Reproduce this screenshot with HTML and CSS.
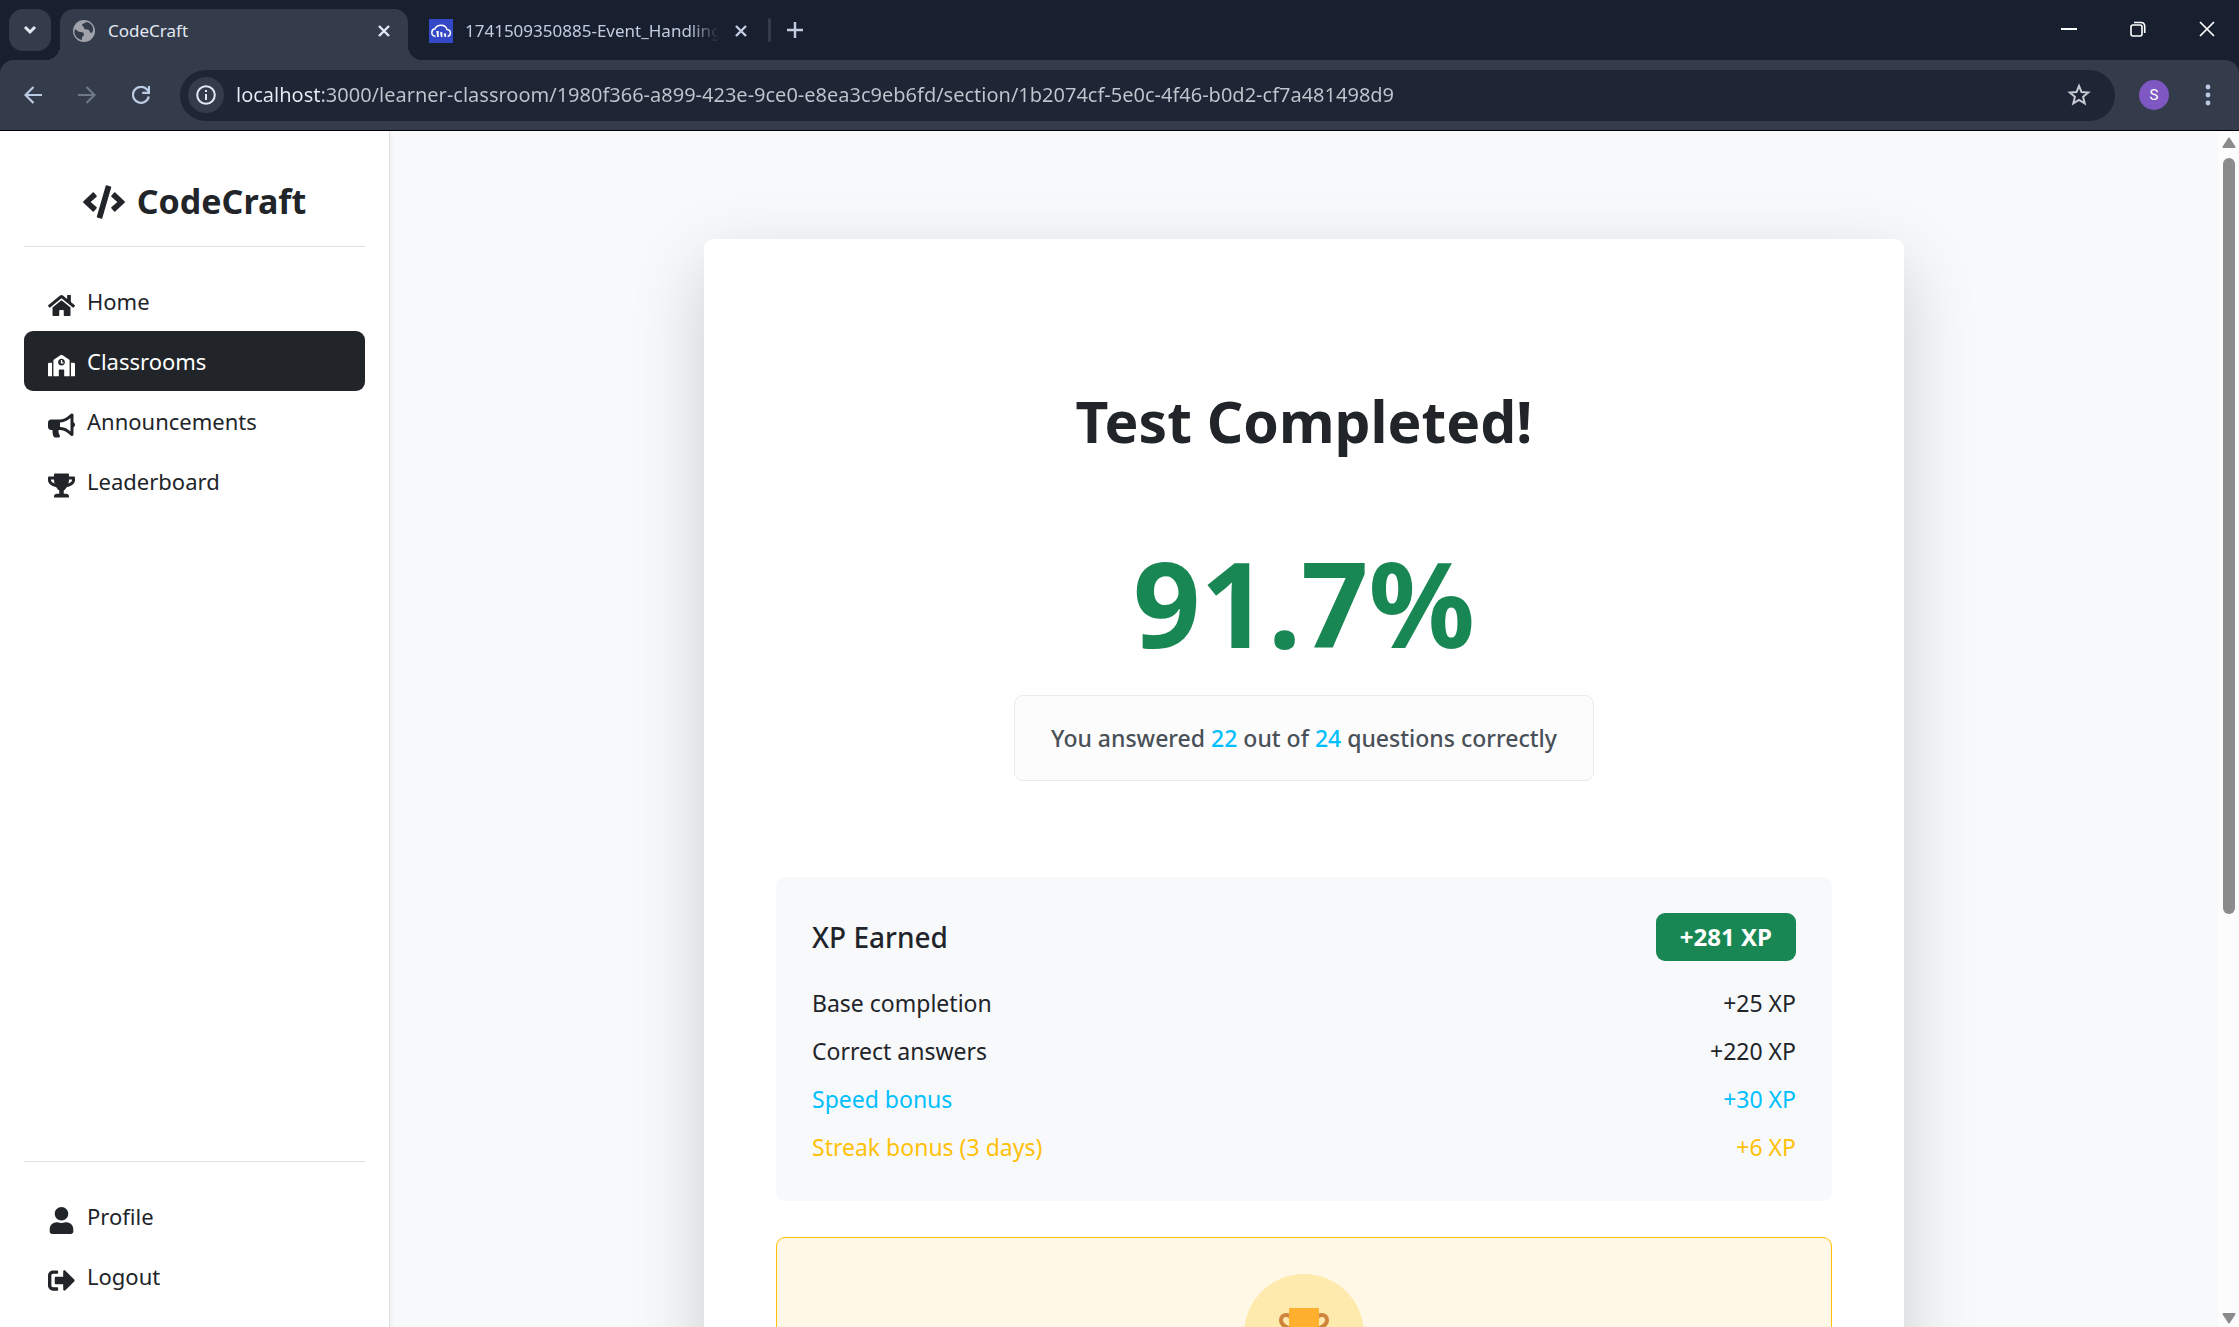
FILE: index.html
```
<!DOCTYPE html>
<html lang="en">
<head>
<meta charset="utf-8">
<title>CodeCraft</title>
<link rel="stylesheet" href="styles.css">
</head>
<body>
<header class="browser">
  <div class="tabstrip">
    <button class="tab-search" aria-label="Search tabs"><svg width="14" height="10" viewBox="0 0 14 10"><path d="M2 2l5 5 5-5" fill="none" stroke="#e3e8f2" stroke-width="3"/></svg></button>
    <div class="tab tab-active">
      <svg class="favicon" viewBox="0 0 24 24"><circle cx="12" cy="12" r="11" fill="#a0a3aa"/><path d="M3 10c2 1 3 3 6 3 2 0 3 1 3 3 0 1-2 1-2 3v2C5 20 2 16 2.500 12zM14 3c-1 2-4 1-4 3 0 1 2 1 2 3s3 1 5 2c1 1 0 2 2 3 1 0 1-1 2-2 1-5-3-9-7-9z" fill="#343c4c"/></svg>
      <span class="tab-title">CodeCraft</span>
      <button class="icon-btn" aria-label="Close tab"><svg width="14" height="14" viewBox="0 0 14 14"><path d="M2 2l10 10M12 2L2 12" stroke="#e3e8f2" stroke-width="2.400"/></svg></button>
    </div>
    <div class="tab">
      <svg class="favicon" viewBox="0 0 24 24"><rect width="24" height="24" fill="#3448c5"/><path d="M6.500 17.500C4 17 2.800 15.500 2.800 13.500c0-2 1.400-3.400 3.200-3.700C7 7.500 9.200 6.200 12 6.200c3 0 5.300 1.700 6 4.300 2 .2 3.400 1.600 3.400 3.500 0 1.700-1 3-2.700 3.500" fill="none" stroke="#fff" stroke-width="1.500"/><path d="M7.300 12h2.400v6H8.200zM11 13.200h2.400V18H11.900zM14.700 14.400h2.400V18h-1.500z" fill="#fff"/></svg>
      <span class="tab-title tab-title-faded">1741509350885-Event_Handling</span>
      <button class="icon-btn" aria-label="Close tab"><svg width="14" height="14" viewBox="0 0 14 14"><path d="M2 2l10 10M12 2L2 12" stroke="#c3cce0" stroke-width="2.400"/></svg></button>
    </div>
    <span class="tab-divider"></span>
    <button class="icon-btn new-tab" aria-label="New tab"><svg width="16" height="16" viewBox="0 0 16 16"><path d="M8 0v16M0 8h16" stroke="#c3cce0" stroke-width="2.400"/></svg></button>
    <div class="window-controls">
      <button class="window-btn" aria-label="Minimize"><svg width="16" height="16" viewBox="0 0 16 16"><path d="M0 8h16" stroke="#fff" stroke-width="2"/></svg></button>
      <button class="window-btn" aria-label="Restore"><svg width="16" height="16" viewBox="0 0 16 16" fill="none" stroke="#fff" stroke-width="1.600"><rect x="1" y="4" width="11" height="11" rx="2"/><path d="M4 1.500h7A3.500 3.500 0 0 1 14.700 5v7"/></svg></button>
      <button class="window-btn" aria-label="Close"><svg width="16" height="16" viewBox="0 0 16 16"><path d="M1 1l14 14M15 1L1 15" stroke="#fff" stroke-width="1.700"/></svg></button>
    </div>
  </div>
  <div class="toolbar">
    <button class="nav-btn" aria-label="Back"><svg viewBox="0 0 18 18"><path d="M18 9H1.500M9.500 1L1.500 9l8 8" fill="none" stroke="#bccbe4" stroke-width="2.200"/></svg></button>
    <button class="nav-btn" aria-label="Forward"><svg viewBox="0 0 18 18"><path d="M0 9h16.500M8.500 1l8 8-8 8" fill="none" stroke="#6f7888" stroke-width="2.200"/></svg></button>
    <button class="nav-btn" aria-label="Reload"><svg viewBox="0 0 18 18"><path d="M16.800 10.500A8 8 0 1 1 15 3.500l1.800 2M17 0v6.800h-6.800" fill="none" stroke="#bccbe4" stroke-width="2.200"/></svg></button>
    <div class="address">
      <span class="site-info"><svg width="20" height="20" viewBox="0 0 20 20"><circle cx="10" cy="10" r="8.800" fill="none" stroke="#e3e8f2" stroke-width="2"/><path d="M9 9h2v6H9zM9 5h2v2H9z" fill="#e3e8f2"/></svg></span>
      <input class="url" type="text" aria-label="Address" value="localhost:3000/learner-classroom/1980f366-a899-423e-9ce0-e8ea3c9eb6fd/section/1b2074cf-5e0c-4f46-b0d2-cf7a481498d9">
      <button class="icon-btn" aria-label="Bookmark"><svg width="24" height="24" viewBox="0 0 24 24"><path d="M12 2.800l2.500 6.200 6.700.5-5.100 4.300 1.600 6.500L12 16.800l-5.700 3.500 1.600-6.500L2.800 9.500l6.700-.5z" fill="none" stroke="#c7cad1" stroke-width="2"/></svg></button>
    </div>
    <button class="avatar" aria-label="Account">S</button>
    <button class="menu-btn" aria-label="Menu"><svg width="6" height="22" viewBox="0 0 6 22" fill="#bccbe4"><circle cx="3" cy="3" r="2.400"/><circle cx="3" cy="11" r="2.400"/><circle cx="3" cy="19" r="2.400"/></svg></button>
  </div>
</header>
<div class="page">
  <aside class="sidebar">
    <div class="brand">
      <svg class="brand-icon" viewBox="0 0 640 512"><path d="M278.900 511.500l-61-17.700c-6.400-1.800-10-8.500-8.200-14.900L346.200 8.700c1.800-6.400 8.500-10 14.900-8.200l61 17.700c6.400 1.800 10 8.500 8.200 14.900L293.800 503.300c-1.900 6.400-8.500 10.100-14.900 8.200zm-114-112.200l43.500-46.400c4.600-4.900 4.300-12.700-.8-17.200L117 256l90.600-79.700c5.100-4.500 5.500-12.300.8-17.200l-43.500-46.400c-4.500-4.800-12.100-5.100-17-.5L3.800 247.200c-5.100 4.700-5.100 12.800 0 17.500l144.100 135.100c4.900 4.600 12.500 4.400 17-.5zm327.200.6l144.100-135.100c5.100-4.700 5.100-12.800 0-17.500L492.100 112.100c-4.800-4.500-12.400-4.300-17 .5L431.600 159c-4.600 4.900-4.300 12.700.8 17.200L523 256l-90.600 79.700c-5.100 4.500-5.500 12.300-.8 17.200l43.500 46.400c4.500 4.900 12.100 5.100 17 .6z"/></svg>
      <span>CodeCraft</span>
    </div>
    <nav class="menu">
      <a class="menu-link" href="#home"><svg viewBox="0 0 576 512"><path d="M280.370 148.260L96 300.110V464a16 16 0 0 0 16 16l112.060-.29a16 16 0 0 0 15.920-16V368a16 16 0 0 1 16-16h64a16 16 0 0 1 16 16v95.640a16 16 0 0 0 16 16.050L464 480a16 16 0 0 0 16-16V300L295.670 148.260a12.190 12.190 0 0 0-15.300 0zM571.600 251.470L488 182.560V44.050a12 12 0 0 0-12-12h-56a12 12 0 0 0-12 12v72.610L318.470 43a48 48 0 0 0-61 0L4.340 251.470a12 12 0 0 0-1.600 16.900l25.500 31A12 12 0 0 0 45.150 301l235.220-193.740a12.190 12.190 0 0 1 15.300 0L530.900 301a12 12 0 0 0 16.900-1.600l25.500-31a12 12 0 0 0-1.700-16.930z"/></svg>Home</a>
      <a class="menu-link menu-link-active" href="#classrooms" aria-current="page"><svg viewBox="0 0 640 512"><path d="M0 224v272c0 8.840 7.160 16 16 16h80V192H32c-17.670 0-32 14.330-32 32zm360-48h-24v-40c0-4.420-3.580-8-8-8h-16c-4.420 0-8 3.580-8 8v64c0 4.420 3.580 8 8 8h48c4.420 0 8-3.580 8-8v-16c0-4.420-3.580-8-8-8zm137.750-63.960l-160-106.670a32.020 32.020 0 0 0-35.500 0l-160 106.670A32.002 32.002 0 0 0 128 138.660V512h128V368c0-8.840 7.160-16 16-16h96c8.840 0 16 7.160 16 16v144h128V138.670c0-10.700-5.350-20.690-14.250-26.630zM320 256c-44.180 0-80-35.820-80-80s35.820-80 80-80 80 35.820 80 80-35.820 80-80 80zm288-64h-64v320h80c8.840 0 16-7.160 16-16V224c0-17.670-14.330-32-32-32z"/></svg>Classrooms</a>
      <a class="menu-link" href="#announcements"><svg viewBox="0 0 576 512"><path d="M576 240c0-23.630-12.950-44.040-32-55.120V32.010C544 23.260 537.020 0 512 0c-7.120 0-14.190 2.380-19.980 7.020l-85.030 68.030C364.280 109.190 310.660 128 256 128H64c-35.350 0-64 28.650-64 64v96c0 35.350 28.650 64 64 64h33.700c-1.390 10.480-2.180 21.140-2.180 32 0 39.770 9.260 77.350 25.560 110.940 5.190 10.690 16.520 17.060 28.400 17.060h74.280c26.050 0 41.690-29.840 25.900-50.560-16.400-21.520-26.150-48.360-26.150-77.440 0-11.110 1.620-21.790 4.410-32H256c54.660 0 108.280 18.810 150.980 52.950l85.030 68.030a32.023 32.023 0 0 0 19.980 7.020c24.920 0 32-22.780 32-32V295.130C563.050 284.040 576 263.630 576 240zm-96 141.420l-33.050-26.440C392.950 311.780 325.120 288 256 288v-96c69.120 0 136.950-23.780 190.950-66.980L480 98.580v282.840z"/></svg>Announcements</a>
      <a class="menu-link" href="#leaderboard"><svg viewBox="0 0 576 512"><path d="M552 64H448V24c0-13.300-10.700-24-24-24H152c-13.300 0-24 10.700-24 24v40H24C10.700 64 0 74.700 0 88v56c0 35.700 22.500 72.400 61.900 100.700 31.500 22.700 69.800 37.100 110 41.700C203.300 338.500 240 360 240 360v72h-48c-35.300 0-64 20.700-64 56v12c0 6.600 5.400 12 12 12h296c6.600 0 12-5.400 12-12v-12c0-35.300-28.700-56-64-56h-48v-72s36.700-21.500 68.100-73.600c40.300-4.600 78.600-19 110-41.700 39.300-28.300 61.900-65 61.900-100.700V88c0-13.300-10.700-24-24-24zM99.300 192.800C74.900 175.200 64 155.600 64 144v-16h64.200c1 32.600 5.800 61.200 12.800 86.200-15.100-5.200-29.200-12.400-41.700-21.400zM512 144c0 16.100-17.700 36.100-35.300 48.800-12.500 9-26.700 16.200-41.800 21.400 7-25 11.800-53.600 12.800-86.200H512v16z"/></svg>Leaderboard</a>
    </nav>
    <nav class="menu menu-bottom">
      <a class="menu-link" href="#profile"><svg viewBox="0 0 448 512"><path d="M224 256c70.700 0 128-57.300 128-128S294.700 0 224 0 96 57.300 96 128s57.300 128 128 128zm89.600 32h-16.700c-22.200 10.200-46.900 16-72.900 16s-50.600-5.800-72.900-16h-16.700C60.200 288 0 348.200 0 422.400V464c0 26.500 21.500 48 48 48h352c26.500 0 48-21.500 48-48v-41.600c0-74.200-60.200-134.400-134.400-134.400z"/></svg>Profile</a>
      <a class="menu-link" href="#logout"><svg viewBox="0 0 512 512"><path d="M497 273L329 441c-15 15-41 4.500-41-17v-96H152c-13.300 0-24-10.700-24-24v-96c0-13.300 10.700-24 24-24h136V88c0-21.400 25.900-32 41-17l168 168c9.300 9.400 9.300 24.600 0 34zM192 436v-40c0-6.600-5.400-12-12-12H96c-17.700 0-32-14.300-32-32V160c0-17.700 14.300-32 32-32h84c6.600 0 12-5.400 12-12V76c0-6.600-5.400-12-12-12H96c-53 0-96 43-96 96v192c0 53 43 96 96 96h84c6.600 0 12-5.400 12-12z"/></svg>Logout</a>
    </nav>
  </aside>
  <main class="content">
    <section class="card">
      <div class="result">
        <h1 class="result-title">Test Completed!</h1>
        <div class="score">91.7%</div>
        <p class="answered">You answered <span class="info">22</span> out of <span class="info">24</span> questions correctly</p>
      </div>
      <div class="xp">
        <div class="xp-header"><h2 class="xp-title">XP Earned</h2><span class="xp-badge">+281 XP</span></div>
        <dl class="xp-list">
          <div class="xp-row"><dt>Base completion</dt><dd>+25 XP</dd></div>
          <div class="xp-row"><dt>Correct answers</dt><dd>+220 XP</dd></div>
          <div class="xp-row info"><dt>Speed bonus</dt><dd>+30 XP</dd></div>
          <div class="xp-row warning"><dt>Streak bonus (3 days)</dt><dd>+6 XP</dd></div>
        </dl>
      </div>
      <div class="badge-card">
        <div class="badge-icon">
          <svg width="50" height="54" viewBox="0 0 50 54"><g fill="none" stroke="#cf853c" stroke-width="4"><path d="M12 12C12 7 2 6 2 13c0 5 5 7 11 10"/><path d="M38 12c0-5 10-6 10 1 0 5-5 7-11 10"/></g><path d="M21 34h8l3 12H18z" fill="#e8912d"/><path d="M10 2q0-1 1-1h28q1 0 1 1v18c0 10-6 17-15 17S10 30 10 20z" fill="#ffb02e"/><rect x="13" y="44" width="24" height="9" rx="2" fill="#9a5a2a"/></svg>
        </div>
      </div>
    </section>
  </main>
  <div class="scrollbar" aria-hidden="true">
    <svg width="14" height="12" viewBox="0 0 14 12"><path d="M7 1.500L12.500 10H1.500z" fill="#8b8b8b" stroke="#8b8b8b" stroke-width="2" stroke-linejoin="round"/></svg>
    <div class="scroll-track"><div class="scroll-thumb"></div></div>
    <svg width="14" height="12" viewBox="0 0 14 12"><path d="M7 10.500L12.500 2H1.500z" fill="#8b8b8b" stroke="#8b8b8b" stroke-width="2" stroke-linejoin="round"/></svg>
  </div>
</div>
</body>
</html>
```
FILE: styles.css
```
* { box-sizing: border-box; }
body {
  margin: 0;
  height: 100vh;
  display: flex;
  flex-direction: column;
  overflow: hidden;
  font-family: "Noto Sans", "Open Sans", sans-serif;
  font-size: 22px;
  line-height: 36px;
  color: #212529;
  background: #f8f9fb;
}
h1, h2, p, dl, dd { margin: 0; }
svg { display: block; flex: none; }
button {
  border: 0;
  padding: 0;
  background: none;
  font: inherit;
  display: flex;
  align-items: center;
  justify-content: center;
  flex: none;
}

/* Browser window */
.browser { background: #182030; border-bottom: 1px solid #000; flex: none; }
.tabstrip { display: flex; align-items: flex-start; height: 60px; padding: 9px 0 0 9px; }
.tab-search { width: 42px; height: 42px; border-radius: 14px; background: #343c4c; }
.tab {
  display: flex;
  align-items: center;
  width: 348px;
  height: 51px;
  padding: 0 12px 8px;
  color: #c3cce0;
  font-size: 17px;
  line-height: 24px;
}
.tab-active {
  position: relative;
  margin-left: 9px;
  border-radius: 14px 14px 0 0;
  background: #343c4c;
  color: #e3e8f2;
}
.tab-active::before, .tab-active::after {
  content: "";
  position: absolute;
  bottom: 0;
  width: 14px;
  height: 14px;
}
.tab-active::before { right: 100%; background: radial-gradient(circle at 0 0, transparent 14px, #343c4c 14px); }
.tab-active::after { left: 100%; background: radial-gradient(circle at 100% 0, transparent 14px, #343c4c 14px); }
.tab:not(.tab-active) { padding-left: 21px; width: 357px; }
.favicon { width: 24px; height: 24px; }
.tab-title { flex: 1; margin-left: 12px; white-space: nowrap; overflow: hidden; }
.tab-title-faded {
  margin-right: 10px;
  -webkit-mask-image: linear-gradient(90deg, #000 88%, transparent);
  mask-image: linear-gradient(90deg, #000 88%, transparent);
}
.icon-btn { width: 24px; height: 24px; }
.tab-divider { width: 3px; height: 24px; margin: 9px 12px 0 3px; border-radius: 2px; background: #343c4c; }
.new-tab { margin-top: 9px; }
.window-controls { display: flex; margin-left: auto; }
.window-btn { width: 69px; height: 40px; }
.window-btn:last-child { margin-right: -2px; }
.toolbar {
  display: flex;
  align-items: center;
  height: 70px;
  padding: 0 28px 0 24px;
  border-radius: 14px 14px 0 0;
  background: #343c4c;
}
.nav-btn { width: 18px; height: 18px; margin-right: 36px; }
.nav-btn svg { width: 18px; height: 18px; }
.address {
  flex: 1;
  display: flex;
  align-items: center;
  height: 51px;
  margin-left: -6px;
  padding: 0 24px 0 8px;
  border-radius: 26px;
  background: #1e2636;
}
.site-info {
  display: flex;
  align-items: center;
  justify-content: center;
  width: 36px;
  height: 36px;
  border-radius: 50%;
  background: #343c4c;
}
.url {
  flex: 1;
  min-width: 0;
  margin: 0 12px;
  padding: 0;
  border: 0;
  outline: 0;
  font: 20px/30px "Noto Sans", "Open Sans", sans-serif;
  color: transparent;
  background: linear-gradient(90deg, #e9edf5 84px, #c1c5cd 84px);
  -webkit-background-clip: text;
  background-clip: text;
}
.avatar {
  width: 30px;
  height: 30px;
  margin-left: 24px;
  border-radius: 50%;
  background: #7e57c2;
  color: #fff;
  font: 15px/30px Roboto, sans-serif;
}
.menu-btn { margin-left: 36px; }

/* Application */
.page { flex: 1; min-height: 0; display: flex; }
.sidebar {
  flex: none;
  width: 390px;
  display: flex;
  flex-direction: column;
  padding: 24px 24px 21px;
  border-right: 1px solid #dee2e6;
  background: #fff;
  box-shadow: 0 3px 6px rgba(0, 0, 0, .075);
}
.brand {
  display: flex;
  align-items: center;
  justify-content: center;
  gap: 12px;
  padding: 24px 0 22px;
  border-bottom: 1px solid #dee2e6;
  font-size: 34px;
  line-height: 45px;
  font-weight: 700;
}
.brand-icon { width: 42px; height: 34px; fill: #212529; }
.menu { padding-top: 24px; }
.menu-bottom { margin-top: auto; border-top: 1px solid #dee2e6; }
.menu-link {
  display: flex;
  align-items: flex-end;
  gap: 12px;
  padding: 12px 24px;
  border-radius: 9px;
  color: #212529;
  text-decoration: none;
}
.menu-link svg { width: 27px; height: 27px; fill: currentColor; }
.menu-link-active { background: #212529; color: #fff; }
.content { flex: 1; min-width: 0; overflow: hidden; padding: 108px 24px; }
.card {
  max-width: 1200px;
  margin: 0 auto;
  padding: 72px;
  border-radius: 9px;
  background: #fff;
  box-shadow: 0 24px 72px rgba(0, 0, 0, .175);
}
.result {
  display: flex;
  flex-direction: column;
  align-items: center;
  padding: 72px 0 96px;
}
.result-title { font-size: 57px; line-height: 76px; font-weight: 700; }
.score { margin: 72px 0 20px; font-size: 118px; line-height: 144px; font-weight: 700; color: #198754; }
.answered {
  padding: 24px 36px;
  border: 1px solid #ebebec;
  border-radius: 9px;
  background: #fcfcfc;
  color: #495057;
  font-size: 23px;
  font-weight: 500;
}
.info { color: #00bfff; }
.warning { color: #ffc107; }
.xp { padding: 36px; border-radius: 9px; background: #f8f9fb; }
.xp-header { display: flex; align-items: center; justify-content: space-between; }
.xp-title { font-size: 28px; font-weight: 500; }
.xp-badge {
  padding: 6px 24px;
  border-radius: 9px;
  background: #198754;
  color: #fff;
  font-size: 24px;
  font-weight: 700;
}
.xp-list { display: flex; flex-direction: column; gap: 12px; margin-top: 24px; font-size: 23px; }
.xp-row { display: flex; justify-content: space-between; }
.badge-card {
  display: flex;
  justify-content: center;
  margin-top: 36px;
  padding: 36px;
  border: 1px solid #ffc107;
  border-radius: 9px;
  background: #fff8e6;
}
.badge-icon {
  display: flex;
  align-items: center;
  justify-content: center;
  width: 120px;
  height: 120px;
  border-radius: 50%;
  background: #ffeaae;
}
.scrollbar {
  flex: none;
  width: 21px;
  display: flex;
  flex-direction: column;
  align-items: center;
  gap: 9px;
  padding: 6px 0 3px;
  background: #fcfcfc;
}
.scroll-track { flex: 1; }
.scroll-thumb { width: 12px; height: 66%; border-radius: 6px; background: #8b8b8b; }
```
